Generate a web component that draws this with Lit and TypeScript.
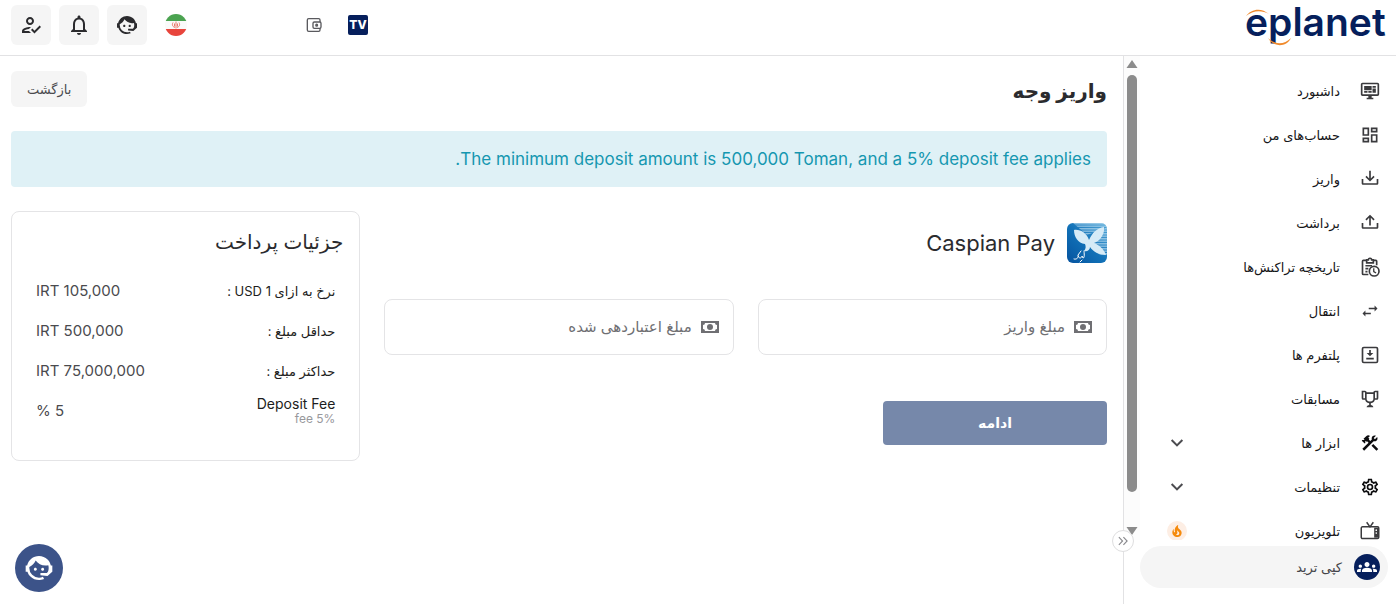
import { LitElement, html, svg, css } from "lit";
import { customElement } from "lit/decorators.js";

const ICONS: Record<string, string> = {
  userCheck:
    "M11 12c2.21 0 4-1.79 4-4s-1.79-4-4-4-4 1.79-4 4 1.79 4 4 4zm0-6c1.1 0 2 .9 2 2s-.9 2-2 2-2-.9-2-2 .9-2 2-2zM5 18c.2-.63 2.57-1.68 4.96-1.94l2.04-2c-.39-.04-.68-.06-1-.06-2.67 0-8 1.34-8 4v2h9l-2-2H5zm15.6-5.5l-5.13 5.17-2.07-2.08L12 17l3.47 3.5L22 13.91z",
  bell: "M12 22c1.1 0 2-.9 2-2h-4c0 1.1.9 2 2 2zm6-6v-5c0-3.07-1.63-5.64-4.5-6.32V4c0-.83-.67-1.5-1.5-1.5s-1.5.67-1.5 1.5v.68C7.64 5.36 6 7.92 6 11v5l-2 2v1h16v-1l-2-2zm-2 1H8v-6c0-2.48 1.51-4.5 4-4.5s4 2.02 4 4.5v6z",
  agent:
    "M18.72,14.76C19.07,13.91 19.26,13 19.26,12C19.26,11.28 19.15,10.59 18.96,9.95C18.31,10.1 17.63,10.18 16.92,10.18C13.86,10.18 11.15,8.67 9.5,6.34C8.61,8.5 6.91,10.26 4.77,11.22C4.73,11.47 4.73,11.74 4.73,12A7.27,7.27 0 0,0 12,19.27C13.05,19.27 14.06,19.04 14.97,18.63C15.54,19.72 15.8,20.26 15.78,20.26C14.14,20.81 12.87,21.08 12,21.08C9.58,21.08 7.27,20.13 5.57,18.42C4.53,17.38 3.76,16.11 3.33,14.73H2V10.18H3.09C3.93,6.04 7.6,2.92 12,2.92C14.4,2.92 16.71,3.87 18.42,5.58C19.69,6.84 20.54,8.45 20.89,10.18H22V14.67H22V14.69L22,14.73H21.94L18.38,18L13.08,17.4V15.73H17.91L18.72,14.76M9.27,11.77C9.57,11.77 9.86,11.89 10.07,12.11C10.28,12.32 10.4,12.61 10.4,12.91C10.4,13.21 10.28,13.5 10.07,13.71C9.86,13.92 9.57,14.04 9.27,14.04C8.64,14.04 8.13,13.54 8.13,12.91C8.13,12.28 8.64,11.77 9.27,11.77M14.72,11.77C15.35,11.77 15.85,12.28 15.85,12.91C15.85,13.54 15.35,14.04 14.72,14.04C14.09,14.04 13.58,13.54 13.58,12.91A1.14,1.14 0 0,1 14.72,11.77Z",
  monitor:
    "M21,16V4H3V16H21M21,2A2,2 0 0,1 23,4V16A2,2 0 0,1 21,18H14V20H16V22H8V20H10V18H3C1.89,18 1,17.1 1,16V4C1,2.89 1.89,2 3,2H21M5,6H14V11H5V6M15,6H19V8H15V6M19,9V14H15V9H19M5,12H9V14H5V12M10,12H14V14H10V12Z",
  dashboard:
    "M19,5V7H15V5H19M9,5V11H5V5H9M19,13V19H15V13H19M9,17V19H5V17H9M21,3H13V9H21V3M11,3H3V13H11V3M21,11H13V21H21V11M11,15H3V21H11V15Z",
  trayDown:
    "M2 12H4V17H20V12H22V17C22 18.11 21.11 19 20 19H4C2.9 19 2 18.11 2 17V12M12 15L17.55 9.54L16.13 8.13L13 11.25V2H11V11.25L7.88 8.13L6.46 9.55L12 15Z",
  trayUp:
    "M2 12H4V17H20V12H22V17C22 18.11 21.11 19 20 19H4C2.9 19 2 18.11 2 17V12M12 2L6.46 7.46L7.88 8.88L11 5.75V15H13V5.75L16.13 8.88L17.55 7.45L12 2Z",
  swap: "M21,9L17.5,5.5V8H10.500V10H17.5V12.5M6.5,11.5L3,15L6.5,18.5V16H13V14H6.5V11.5Z",
  trophy:
    "M18 2C17.1 2 16 3 16 4H8C8 3 6.9 2 6 2H2V11C2 12 3 13 4 13H6.2C6.6 15 7.9 16.7 11 17V19.08C8 19.54 8 22 8 22H16C16 22 16 19.54 13 19.08V17C16.1 16.7 17.4 15 17.8 13H20C21 13 22 12 22 11V2H18M6 11H4V4H6V11M16 11.5C16 13.43 15.42 15 12 15C8.59 15 8 13.43 8 11.5V6H16V11.5M20 11H18V4H20V11Z",
  tools:
    "m13.78 15.17 2.12-2.12 6 6-2.12 2.12zM17.5 10c1.93 0 3.5-1.57 3.5-3.5 0-.58-.16-1.12-.41-1.6l-2.7 2.7-1.49-1.49 2.7-2.7c-.48-.25-1.02-.41-1.6-.41C15.57 3 14 4.57 14 6.5c0 .41.08.8.21 1.16l-1.85 1.85-1.78-1.78.71-.71-1.41-1.41L12 3.49c-1.17-1.17-3.07-1.17-4.24 0L4.22 7.03l1.41 1.41H2.81l-.71.71 3.54 3.54.71-.71V9.15l1.41 1.41.71-.71 1.78 1.78-7.41 7.41 2.12 2.12L16.34 9.79c.36.13.75.21 1.16.21z",
  cog: "M12,8A4,4 0 0,1 16,12A4,4 0 0,1 12,16A4,4 0 0,1 8,12A4,4 0 0,1 12,8M12,10A2,2 0 0,0 10,12A2,2 0 0,0 12,14A2,2 0 0,0 14,12A2,2 0 0,0 12,10M10,22C9.75,22 9.54,21.82 9.5,21.58L9.13,18.93C8.5,18.68 7.96,18.34 7.44,17.94L4.95,18.95C4.73,19.03 4.46,18.95 4.34,18.73L2.34,15.27C2.21,15.05 2.27,14.78 2.46,14.63L4.57,12.97L4.5,12L4.57,11L2.46,9.37C2.27,9.22 2.21,8.95 2.34,8.73L4.34,5.27C4.46,5.05 4.73,4.96 4.95,5.05L7.44,6.05C7.96,5.66 8.5,5.32 9.13,5.07L9.5,2.42C9.54,2.18 9.75,2 10,2H14C14.25,2 14.46,2.18 14.5,2.42L14.87,5.07C15.5,5.32 16.04,5.66 16.56,6.05L19.05,5.05C19.27,4.96 19.54,5.05 19.66,5.27L21.66,8.73C21.79,8.95 21.73,9.22 21.54,9.37L19.43,11L19.5,12L19.43,13L21.54,14.63C21.73,14.78 21.79,15.05 21.66,15.27L19.66,18.73C19.54,18.95 19.27,19.04 19.05,18.95L16.56,17.95C16.04,18.34 15.5,18.68 14.87,18.93L14.5,21.58C14.46,21.82 14.25,22 14,22H10M11.25,4L10.88,6.61C9.68,6.86 8.62,7.5 7.85,8.39L5.44,7.35L4.69,8.65L6.8,10.2C6.4,11.37 6.4,12.64 6.8,13.8L4.68,15.36L5.43,16.66L7.86,15.62C8.63,16.5 9.68,17.14 10.87,17.38L11.24,20H12.76L13.13,17.39C14.32,17.14 15.37,16.5 16.14,15.62L18.57,16.66L19.32,15.36L17.2,13.81C17.6,12.64 17.6,11.37 17.2,10.2L19.31,8.65L18.56,7.35L16.15,8.39C15.38,7.5 14.32,6.86 13.12,6.62L12.75,4H11.25Z",
  groups:
    "M12 12.75c1.63 0 3.07.39 4.24.9 1.08.48 1.76 1.56 1.76 2.73V18H6v-1.61c0-1.18.68-2.26 1.76-2.73 1.17-.52 2.61-.91 4.24-.91zM4 13c1.1 0 2-.9 2-2s-.9-2-2-2-2 .9-2 2 .9 2 2 2zm1.13 1.1c-.37-.06-.74-.1-1.13-.1-.99 0-1.93.21-2.78.58C.48 14.9 0 15.62 0 16.43V18h4.5v-1.61c0-.83.23-1.61.63-2.29zM20 13c1.1 0 2-.9 2-2s-.9-2-2-2-2 .9-2 2 .9 2 2 2zm4 3.43c0-.81-.48-1.53-1.22-1.85-.85-.37-1.79-.58-2.78-.58-.39 0-.76.04-1.13.1.4.68.63 1.46.63 2.29V18H24v-1.57zM12 6c1.66 0 3 1.34 3 3s-1.34 3-3 3-3-1.34-3-3 1.34-3 3-3z",
  chevron: "M6.4,7.6L12,13.2L17.6,7.6L19.3,9.3L12,16.6L4.7,9.3L6.4,7.6Z",
  doubleChevron:
    "M4.2,6.2L5.6,4.8L12.6,12L5.600,19.2L4.2,17.8L9.8,12L4.2,6.2M12,6.2L13.400,4.800L20.400,12L13.400,19.200L12,17.800L17.600,12L12,6.200Z",
  cash: "M3,6H21V18H3V6M12,9A3,3 0 0,1 15,12A3,3 0 0,1 12,15A3,3 0 0,1 9,12A3,3 0 0,1 12,9M7,8A2,2 0 0,1 5,10V14A2,2 0 0,1 7,16H17A2,2 0 0,1 19,14V10A2,2 0 0,1 17,8H7Z",
  fire: "M17.66 11.2C17.43 10.9 17.15 10.64 16.89 10.38C16.22 9.78 15.46 9.35 14.82 8.72C13.33 7.26 13 4.85 13.95 3C13 3.23 12.17 3.75 11.46 4.32C8.87 6.4 7.85 10.07 9.07 13.22C9.11 13.32 9.15 13.42 9.15 13.55C9.15 13.77 9 13.97 8.8 14.05C8.57 14.15 8.33 14.09 8.14 13.93C8.08 13.88 8.04 13.83 8 13.76C6.87 12.33 6.69 10.28 7.45 8.64C5.78 10 4.87 12.3 5 14.47C5.06 14.97 5.12 15.47 5.29 15.97C5.43 16.57 5.7 17.17 6 17.7C7.08 19.43 8.95 20.67 10.96 20.92C13.1 21.19 15.39 20.8 17.03 19.32C18.86 17.66 19.5 15 18.56 12.72L18.43 12.46C18.22 12 17.66 11.2 17.66 11.2M14.5 17.5C14.22 17.74 13.76 18 13.4 18.1C12.28 18.5 11.16 17.94 10.5 17.28C11.69 17 12.4 16.12 12.61 15.23C12.78 14.43 12.46 13.77 12.33 13C12.21 12.26 12.23 11.63 12.5 10.94C12.69 11.32 12.89 11.7 13.13 12C13.9 13 15.11 13.44 15.37 14.8C15.41 14.94 15.43 15.08 15.43 15.23C15.46 16.05 15.1 16.95 14.5 17.5H14.5Z",
};

// Icons that are drawn with strokes on the same 24-unit grid.
const OUTLINES: Record<string, unknown> = {
  wallet: svg`<g fill="none" stroke="currentColor" stroke-width="2"><rect x="2" y="2.500" width="19" height="19" rx="2"/><rect x="10.500" y="7.500" width="12" height="9.500" rx="2" fill="#fff"/><circle cx="16" cy="12.200" r="1.300"/></g>`,
  history: svg`<g fill="none" stroke="currentColor" stroke-width="2"><path d="M8 4H4a1 1 0 0 0-1 1v15a1 1 0 0 0 1 1h6M16 4h3a1 1 0 0 1 1 1v5"/><path d="M8 3.500h2a2 2 0 0 1 4 0h2V7H8zM6.500 10.500h8M6.500 14h3.500M6.500 17.500h2.500"/><circle cx="17" cy="17" r="5.800"/><path d="M16.500 13.500v4l2.800 1.700" stroke-width="1.600"/></g>`,
  platform: svg`<rect x="3" y="3" width="18" height="18" rx="1.500" fill="none" stroke="currentColor" stroke-width="2"/><path d="M11 6h2v3.500h3L12 13.500 8 9.500h3zM7.500 15.300h9v2h-9z"/>`,
  television: svg`<g fill="none" stroke="currentColor" stroke-width="1.800"><rect x="1.500" y="7" width="21" height="14" rx="1.500"/><path d="M8 1.500 12 7l4-5.500"/></g><path d="M17 8h5v12h-5z"/><circle cx="19.500" cy="11" r="1" fill="#fff"/><circle cx="19.500" cy="14.500" r="1" fill="#fff"/>`,
};

const icon = (name: string, size = "s20") => html`
  <svg class="icon ${size}" viewBox="0 0 24 24" aria-hidden="true">
    ${name in OUTLINES ? OUTLINES[name] : svg`<path fill-rule="evenodd" d=${ICONS[name]} />`}
  </svg>
`;

const NAV: { label: string; icon: string; strong?: boolean; more?: boolean; hot?: boolean }[] = [
  { label: "داشبورد", icon: "monitor" },
  { label: "حساب‌های من", icon: "dashboard" },
  { label: "واریز", icon: "trayDown" },
  { label: "برداشت", icon: "trayUp" },
  { label: "تاریخچه تراکنش‌ها", icon: "history" },
  { label: "انتقال", icon: "swap" },
  { label: "پلتفرم ها", icon: "platform" },
  { label: "مسابقات", icon: "trophy" },
  { label: "ابزار ها", icon: "tools", strong: true, more: true },
  { label: "تنظیمات", icon: "cog", strong: true, more: true },
  { label: "تلویزیون", icon: "television", hot: true },
];

const DETAILS: { label: string; note?: string; value: string }[] = [
  { label: "نرخ به ازای 1 USD :", value: "IRT 105,000" },
  { label: "حداقل مبلغ :", value: "IRT 500,000" },
  { label: "حداکثر مبلغ :", value: "IRT 75,000,000" },
  { label: "Deposit Fee", note: "fee 5%", value: "5 %" },
];

const FIELDS = [
  { id: "amount", label: "مبلغ واریز" },
  { id: "credited", label: "مبلغ اعتباردهی شده" },
];

@customElement("app-root")
export class AppRoot extends LitElement {
  static styles = css`
    :host {
      display: flex;
      flex-direction: column;
      height: 100vh;
      direction: rtl;
      background: #fff;
      color: #2b2b2e;
      font-family: Inter, "DejaVu Sans", sans-serif;
      font-size: 14px;
      line-height: 20px;
    }
    *, *::before, *::after { box-sizing: border-box; }
    button, input { font: inherit; color: inherit; border: 0; }
    button { cursor: pointer; }
    a { color: inherit; text-decoration: none; }
    h1, h2, h3, p, ul, dl, dd { margin: 0; padding: 0; font-weight: 400; }
    ul { list-style: none; }

    .icon { display: block; flex: none; fill: currentColor; }
    .s14 { width: 14px; height: 14px; }
    .s16 { width: 16px; height: 16px; }
    .s20 { width: 20px; height: 20px; }
    .s24 { width: 24px; height: 24px; }
    .s32 { width: 32px; height: 32px; }

    .header {
      flex: none;
      display: flex;
      align-items: center;
      justify-content: space-between;
      height: 56px;
      padding: 0 8px 6px 11px;
      border-bottom: 1px solid #e2e2e4;
    }
    .logo { display: block; width: 144px; height: 48px; overflow: visible; }
    .logo-word { font: 600 39px Inter, sans-serif; fill: #061f5c; }
    .actions { display: flex; align-items: center; gap: 8px; }
    .links { display: flex; align-items: center; gap: 26px; margin-left: 111px; color: #5a5a5e; }
    .tv { display: block; width: 20px; height: 20px; }
    .tv-word { font: 800 12px Inter, sans-serif; fill: #fff; }
    .plain { display: flex; padding: 0; background: none; }
    .flag { margin-left: 10px; }
    .flag-art { display: block; width: 22px; height: 22px; }
    .square {
      display: flex;
      align-items: center;
      justify-content: center;
      width: 40px;
      height: 40px;
      padding: 0;
      border-radius: 6px;
      background: #f5f5f5;
    }

    .body { flex: 1; min-height: 0; display: flex; }

    .sidebar {
      position: relative;
      flex: none;
      width: 273px;
      display: flex;
      flex-direction: column;
      border-left: 1px solid #e2e2e4;
    }
    .scroller { flex: 1; min-height: 0; display: flex; overflow: hidden; }
    .nav { flex: 1; padding-top: 13px; }
    .nav-link {
      display: flex;
      align-items: center;
      gap: 20px;
      height: 44px;
      padding: 0 16px 0 27px;
      color: #3a3a3d;
      font-size: 13px;
    }
    .nav-link.strong { color: #0c0c0e; }
    .nav-label { flex: 1; color: #151518; }
    .nav-more { color: #4c4c50; }
    .hot {
      display: flex;
      align-items: center;
      justify-content: center;
      width: 20px;
      height: 20px;
      border-radius: 50%;
      background: #fdeee4;
      color: #f58a0c;
    }
    .track {
      flex: none;
      width: 16px;
      display: flex;
      flex-direction: column;
      align-items: center;
      gap: 7px;
      padding: 4px 0 5px;
      background: #fcfcfc;
    }
    .arrow { width: 12px; height: 8px; fill: #8b8b8b; display: block; flex: none; }
    .thumb { width: 10px; flex: 1; border-radius: 5px; background: #8b8b8b; margin-bottom: 28px; }
    .copy-trade {
      flex: none;
      display: flex;
      align-items: center;
      gap: 12px;
      height: 42px;
      margin: 6px 8px 16px 16px;
      padding: 0 8px;
      border-radius: 21px;
      background: #f5f5f5;
      color: #444448;
      font-size: 13px;
    }
    .copy-badge {
      display: flex;
      align-items: center;
      justify-content: center;
      width: 26px;
      height: 26px;
      border-radius: 50%;
      background: #061f5c;
      color: #fff;
    }
    .collapse {
      position: absolute;
      left: -12px;
      bottom: 52px;
      display: flex;
      align-items: center;
      justify-content: center;
      width: 22px;
      height: 22px;
      padding: 0;
      border: 1px solid #dededf;
      border-radius: 50%;
      background: #fff;
      color: #8a8a8e;
    }

    .main { flex: 1; min-width: 0; padding: 15px 16px 0 11px; }
    .title-row { display: flex; justify-content: space-between; align-items: flex-start; height: 60px; }
    .title { font-size: 20px; line-height: 40px; font-weight: 700; }
    .back {
      height: 36px;
      padding: 0 16px;
      border-radius: 6px;
      background: #f5f5f5;
      color: #4a4a4e;
      font-size: 13px;
    }
    .alert {
      padding: 16px;
      border-radius: 4px;
      background: #dff1f6;
      color: #1597b0;
      font-size: 17px;
      line-height: 24px;
    }
    .columns {
      display: grid;
      grid-template-columns: repeat(3, minmax(0, 1fr));
      gap: 24px;
      margin-top: 24px;
    }
    .form {
      grid-column: span 2;
      display: grid;
      grid-template-columns: repeat(2, minmax(0, 1fr));
      column-gap: 24px;
      align-content: start;
      padding-top: 12px;
    }
    .method { grid-column: span 2; display: flex; align-items: center; gap: 12px; margin-bottom: 36px; }
    .method-name { font-size: 22px; line-height: 28px; }
    .method-logo { display: block; width: 40px; height: 40px; }
    .field {
      display: flex;
      align-items: center;
      gap: 6px;
      height: 56px;
      padding: 0 11px;
      border: 1px solid #e4e4e6;
      border-radius: 8px;
      color: #6f6f73;
      font-size: 15px;
    }
    .field-label { flex: none; }
    .field-input { flex: 1; min-width: 0; padding: 0; outline: 0; background: none; }
    .submit {
      grid-column: span 2;
      width: 224px;
      height: 44px;
      margin-top: 46px;
      border-radius: 4px;
      background: #7688aa;
      color: #fff;
      font-size: 14px;
      font-weight: 700;
    }

    .details { height: 250px; padding: 16px; border: 1px solid #e4e4e6; border-radius: 8px; }
    .details-title { font-size: 20px; line-height: 28px; font-weight: 500; }
    .rows { padding: 15px 8px 0; }
    .row { display: flex; align-items: center; justify-content: space-between; height: 40px; }
    .term { font-size: 13px; line-height: 16px; color: #1d1d20; }
    .term.latin { font-size: 14px; }
    .note { display: block; font-size: 12px; line-height: 14px; color: #98989c; }
    .value { font-size: 15px; color: #4a4a4e; }

    .chat {
      position: fixed;
      left: 15px;
      bottom: 12px;
      display: flex;
      align-items: center;
      justify-content: center;
      width: 48px;
      height: 48px;
      padding: 0;
      border-radius: 50%;
      background: #3c5389;
      color: #fff;
    }
  `;

  private renderHeader() {
    return html`
      <header class="header">
        <a href="#" aria-label="eplanet">
          <svg class="logo" viewBox="0 0 144 48">
            <text class="logo-word" x="1" y="35" direction="ltr">eplanet</text>
            <path d="M2 15C7 8 17 6 25 13C18 9 9 9 2 15Z" fill="#f08a2c" />
            <path d="M24 37C31 44 40 44 47 37C42 47 29 46 24 37Z" fill="#f08a2c" />
          </svg>
        </a>
        <div class="actions">
          <div class="links">
            <a href="#" aria-label="TV">
              <svg class="tv" viewBox="0 0 20 20">
                <rect width="20" height="20" rx="2" fill="#061f5c" />
                <text class="tv-word" x="10" y="14" text-anchor="middle" direction="ltr">TV</text>
              </svg>
            </a>
            <a href="#" aria-label="کیف پول">${icon("wallet", "s16")}</a>
          </div>
          <button class="plain flag" aria-label="فارسی">
            <svg class="flag-art" viewBox="0 0 22 22">
              <clipPath id="disc"><circle cx="11" cy="11" r="11" /></clipPath>
              <g clip-path="url(#disc)">
                <rect width="22" height="22" fill="#fafafa" />
                <rect width="22" height="7" fill="#4ba350" />
                <rect y="15" width="22" height="7" fill="#e8453c" />
                <path d="M11 7.500v7M8 8.500c-1.500 2.500 0 4.500 2 5M14 8.500c1.500 2.500 0 4.500-2 5M9.500 9.500v3M12.500 9.500v3" fill="none" stroke="#ea7a6c" stroke-width="1" />
              </g>
            </svg>
          </button>
          <button class="square" aria-label="پشتیبانی">${icon("agent", "s24")}</button>
          <button class="square" aria-label="اعلان‌ها">${icon("bell", "s24")}</button>
          <button class="square" aria-label="حساب کاربری">${icon("userCheck", "s24")}</button>
        </div>
      </header>
    `;
  }

  private renderSidebar() {
    return html`
      <aside class="sidebar">
        <div class="scroller">
          <nav class="nav">
            <ul>
              ${NAV.map(
                (item) => html`
                  <li>
                    <a class="nav-link ${item.strong ? "strong" : ""}" href="#">
                      ${icon(item.icon)}
                      <span class="nav-label">${item.label}</span>
                      ${item.more ? html`<span class="nav-more">${icon("chevron")}</span>` : ""}
                      ${item.hot ? html`<span class="hot">${icon("fire", "s16")}</span>` : ""}
                    </a>
                  </li>
                `
              )}
            </ul>
          </nav>
          <div class="track" aria-hidden="true">
            <svg class="arrow" viewBox="0 0 12 8"><path d="M6 0 11.500 8H.5z" /></svg>
            <div class="thumb"></div>
            <svg class="arrow" viewBox="0 0 12 8"><path d="M6 8 11.500 0H.5z" /></svg>
          </div>
        </div>
        <a class="copy-trade" href="#">
          <span class="copy-badge">${icon("groups")}</span>
          <span>کپی ترید</span>
        </a>
        <button class="collapse" aria-label="جمع کردن منو">${icon("doubleChevron", "s14")}</button>
      </aside>
    `;
  }

  private renderMethodLogo() {
    return html`
      <svg class="method-logo" viewBox="0 0 40 40" aria-hidden="true">
        <defs>
          <linearGradient id="sky" x1="0" y1="1" x2="1" y2="0">
            <stop offset="0" stop-color="#05539f" />
            <stop offset="0.5" stop-color="#1272b8" />
            <stop offset="1" stop-color="#4ba3d6" />
          </linearGradient>
          <pattern id="lines" width="40" height="2.500" patternUnits="userSpaceOnUse">
            <rect width="40" height="1.500" fill="#cfe8f6" />
          </pattern>
          <clipPath id="tile"><rect width="40" height="40" rx="6" /></clipPath>
        </defs>
        <g clip-path="url(#tile)">
          <rect width="40" height="40" fill="url(#sky)" />
          <path d="M6 0H40V32H33L24 24 38 5 20 12Z" fill="url(#lines)" opacity="0.600" />
          <path d="M7 7C13 6 20 10 22 17C25 10 30 5 37 4C38 11 33 18 27 20C32 22 37 26 39 32C33 32 26 29 23 24C23 27 20 29 17 28C19 26 19 23 18 21C11 20 7 14 7 7Z" fill="#d6ebf7" />
          <path d="M7 36c3 1 5-2 4-4l3-4M11 33c2 4 4 1 4 0l1 2c2 0 1-5 1-7M13 39l2-2" fill="none" stroke="#fff" stroke-width="1" stroke-linecap="round" />
        </g>
      </svg>
    `;
  }

  private renderMain() {
    return html`
      <main class="main">
        <div class="title-row">
          <h1 class="title">واریز وجه</h1>
          <button class="back">بازگشت</button>
        </div>
        <p class="alert" role="status">The minimum deposit amount is 500,000 Toman, and a 5% deposit fee applies.</p>
        <div class="columns">
          <form class="form" @submit=${(e: Event) => e.preventDefault()}>
            <div class="method">
              ${this.renderMethodLogo()}
              <h2 class="method-name">Caspian Pay</h2>
            </div>
            ${FIELDS.map(
              (f) => html`
                <label class="field" for=${f.id}>
                  ${icon("cash", "s24")}
                  <span class="field-label">${f.label}</span>
                  <input class="field-input" id=${f.id} type="text" inputmode="decimal" />
                </label>
              `
            )}
            <button class="submit" type="submit">ادامه</button>
          </form>
          <section class="details">
            <h3 class="details-title">جزئیات پرداخت</h3>
            <dl class="rows">
              ${DETAILS.map(
                (d) => html`
                  <div class="row">
                    <dt class="term ${d.note ? "latin" : ""}">
                      ${d.label}${d.note ? html`<span class="note">${d.note}</span>` : ""}
                    </dt>
                    <dd class="value">${d.value}</dd>
                  </div>
                `
              )}
            </dl>
          </section>
        </div>
      </main>
    `;
  }

  render() {
    return html`
      ${this.renderHeader()}
      <div class="body">${this.renderSidebar()} ${this.renderMain()}</div>
      <button class="chat" aria-label="گفتگو با پشتیبانی">${icon("agent", "s32")}</button>
    `;
  }
}
